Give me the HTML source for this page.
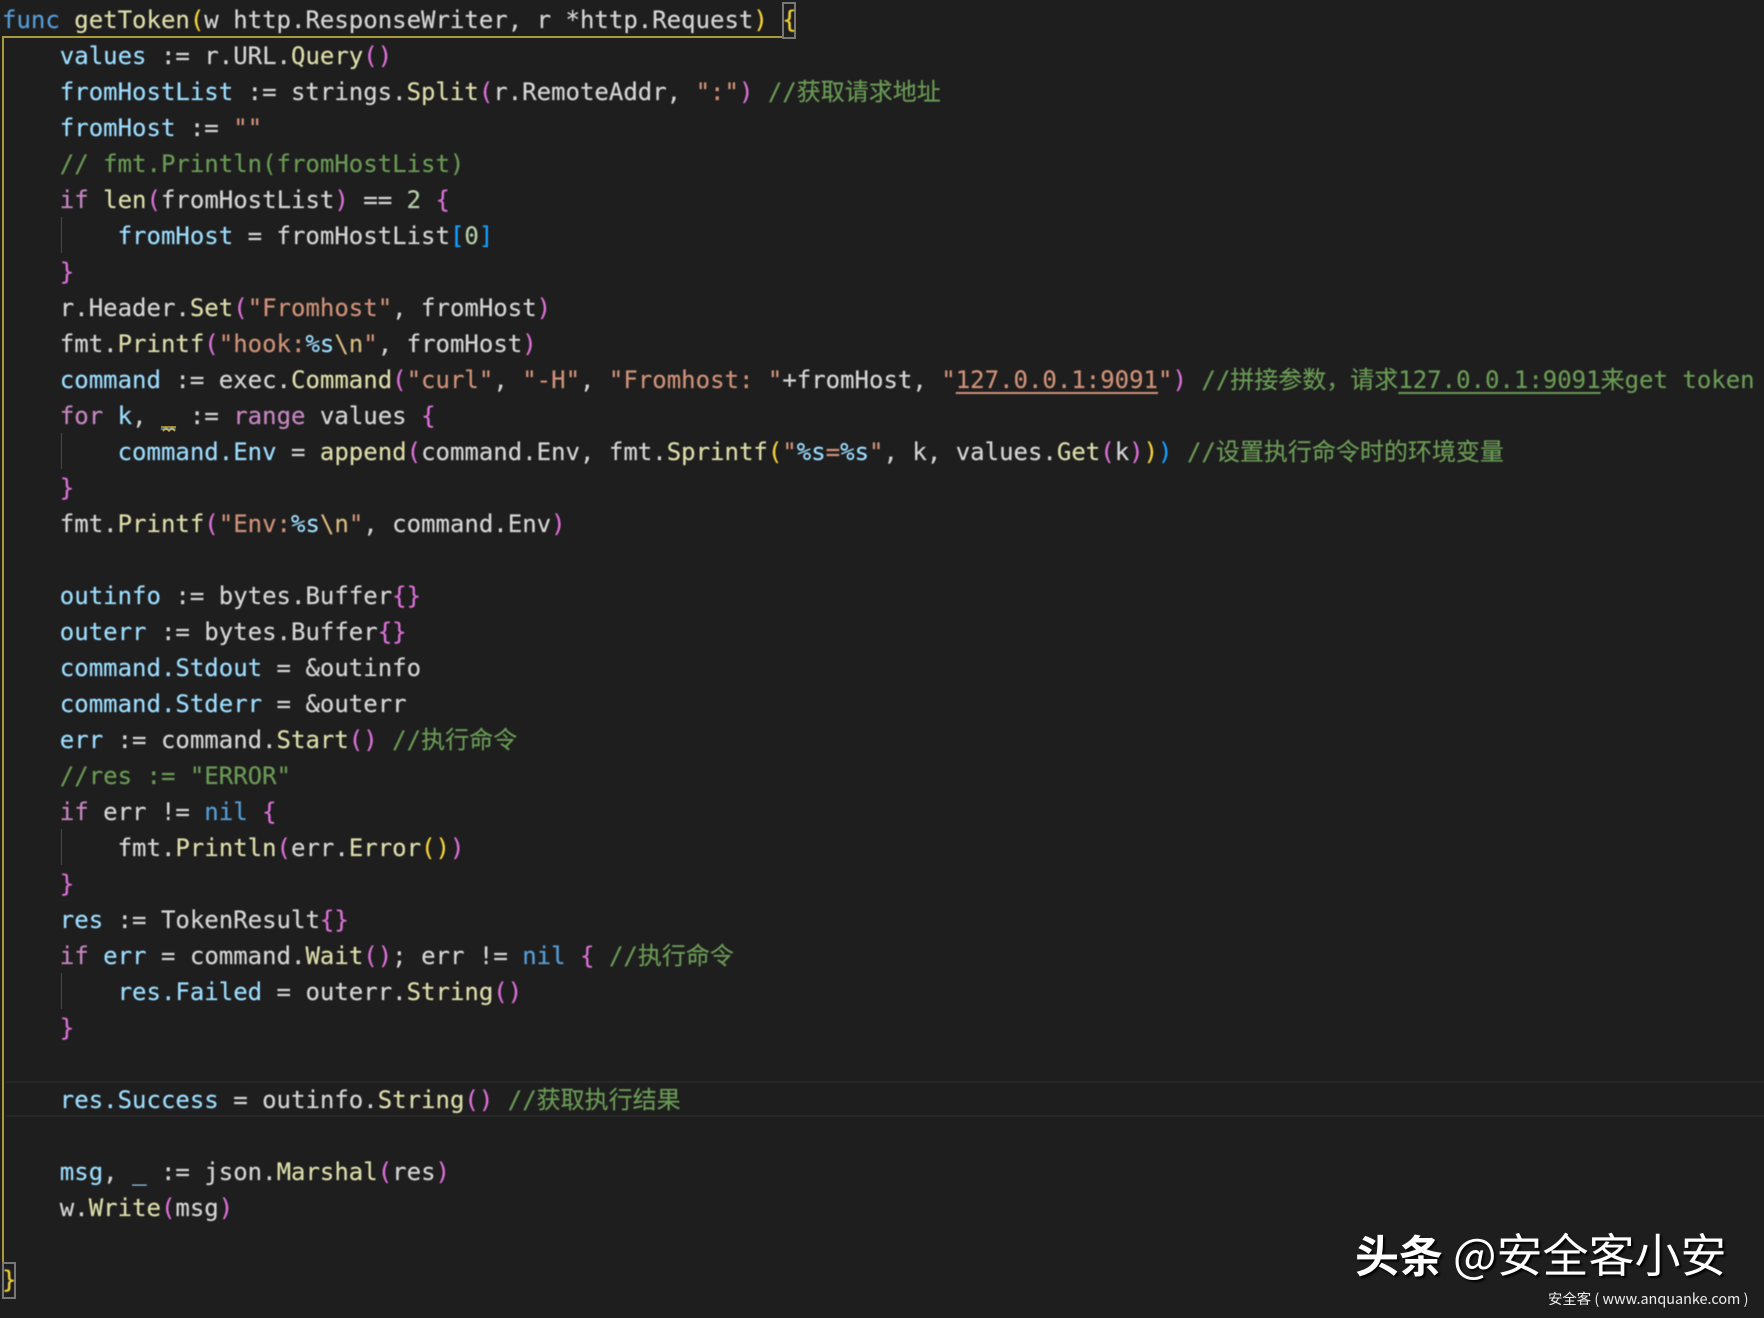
<!DOCTYPE html>
<html lang="zh"><head><meta charset="utf-8"><title>getToken</title>
<style>
html,body{margin:0;padding:0;background:#1e1e1e}
#p{position:relative;width:1764px;height:1318px;overflow:hidden;background:#1e1e1e}
.l{position:absolute;left:2px;margin-top:1px;height:36px;line-height:36px;white-space:pre;font-family:"DejaVu Sans Mono","Noto Sans CJK SC",monospace;font-size:24px;color:#d4d4d4;filter:blur(.4px);-webkit-text-stroke:.2px}
.a{position:absolute}
i{font-style:normal}
.v{color:#9cdcfe}.f{color:#dcdcaa}.k{color:#c586c0}.b{color:#569cd6}.s{color:#ce9178}.c{color:#6a9955}.n{color:#b5cea8}.e{color:#d7ba7d}
.g{color:#f2d33a}.m{color:#da70d6}.h{color:#179fff}
.u{text-decoration:underline;text-underline-offset:4px;text-decoration-thickness:2px}
.z{display:inline-block;width:24px;text-align:center;font-family:"Noto Sans CJK SC",sans-serif;font-size:24px;line-height:0}
</style></head><body><div id="p">
<div class="a" style="left:7px;top:1081px;width:1757px;height:32px;border-top:2px solid #282828;border-bottom:2px solid #282828"></div>
<div class="a" style="left:2px;top:36px;width:2px;height:1226px;background:#a89a3a"></div>
<div class="a" style="left:2px;top:36px;width:781px;height:2px;background:#a89a3a"></div>
<div class="a" style="left:782px;top:2px;width:10px;height:33px;border:2px solid #777"></div>
<div class="a" style="left:2px;top:1262px;width:10px;height:33px;border:2px solid #777"></div>
<div class="a" style="left:61px;top:217px;width:1px;height:36px;background:#484848"></div>
<div class="a" style="left:61px;top:433px;width:1px;height:36px;background:#484848"></div>
<div class="a" style="left:61px;top:829px;width:1px;height:36px;background:#484848"></div>
<div class="a" style="left:61px;top:973px;width:1px;height:36px;background:#484848"></div>
<svg class="a" style="left:160px;top:425px" width="18" height="10"><path d="M1 2h15M3 6l3-3 3 3 3-3 3 3" fill="none" stroke="#c9a52e" stroke-width="1.6"/></svg>

<div class="l" style="top:1px"><i class="b">func</i> <i class="f">getToken</i><i class="g">(</i>w http.ResponseWriter, r *http.Request<i class="g">)</i> <i class="g">{</i></div>
<div class="l" style="top:37px">    <i class="v">values</i> := r.URL.<i class="f">Query</i><i class="m">()</i></div>
<div class="l" style="top:73px">    <i class="v">fromHostList</i> := strings.<i class="f">Split</i><i class="m">(</i>r.RemoteAddr, <i class="s">":"</i><i class="m">)</i> <i class="c">//<i class="z">获</i><i class="z">取</i><i class="z">请</i><i class="z">求</i><i class="z">地</i><i class="z">址</i></i></div>
<div class="l" style="top:109px">    <i class="v">fromHost</i> := <i class="s">""</i></div>
<div class="l" style="top:145px">    <i class="c">// fmt.Println(fromHostList)</i></div>
<div class="l" style="top:181px">    <i class="k">if</i> <i class="f">len</i><i class="m">(</i>fromHostList<i class="m">)</i> == <i class="n">2</i> <i class="m">{</i></div>
<div class="l" style="top:217px">        <i class="v">fromHost</i> = fromHostList<i class="h">[</i><i class="n">0</i><i class="h">]</i></div>
<div class="l" style="top:253px">    <i class="m">}</i></div>
<div class="l" style="top:289px">    r.Header.<i class="f">Set</i><i class="m">(</i><i class="s">"Fromhost"</i>, fromHost<i class="m">)</i></div>
<div class="l" style="top:325px">    fmt.<i class="f">Printf</i><i class="m">(</i><i class="s">"hook:</i><i class="v">%s</i><i class="e">\n</i><i class="s">"</i>, fromHost<i class="m">)</i></div>
<div class="l" style="top:361px">    <i class="v">command</i> := exec.<i class="f">Command</i><i class="m">(</i><i class="s">"curl"</i>, <i class="s">"-H"</i>, <i class="s">"Fromhost: "</i>+fromHost, <i class="s">"</i><i class="s u">127.0.0.1:9091</i><i class="s">"</i><i class="m">)</i> <i class="c">//<i class="z">拼</i><i class="z">接</i><i class="z">参</i><i class="z">数</i><i class="z">，</i><i class="z">请</i><i class="z">求</i><i class="u">127.0.0.1:9091</i><i class="z">来</i>get token</i></div>
<div class="l" style="top:397px">    <i class="k">for</i> <i class="v">k</i>, <i class="v">_</i> := <i class="k">range</i> values <i class="m">{</i></div>
<div class="l" style="top:433px">        <i class="v">command.Env</i> = <i class="f">append</i><i class="m">(</i>command.Env, fmt.<i class="f">Sprintf</i><i class="g">(</i><i class="s">"</i><i class="v">%s</i><i class="s">=</i><i class="v">%s</i><i class="s">"</i>, k, values.<i class="f">Get</i><i class="m">(</i>k<i class="m">)</i><i class="g">)</i><i class="h">)</i> <i class="c">//<i class="z">设</i><i class="z">置</i><i class="z">执</i><i class="z">行</i><i class="z">命</i><i class="z">令</i><i class="z">时</i><i class="z">的</i><i class="z">环</i><i class="z">境</i><i class="z">变</i><i class="z">量</i></i></div>
<div class="l" style="top:469px">    <i class="m">}</i></div>
<div class="l" style="top:505px">    fmt.<i class="f">Printf</i><i class="m">(</i><i class="s">"Env:</i><i class="v">%s</i><i class="e">\n</i><i class="s">"</i>, command.Env<i class="m">)</i></div>
<div class="l" style="top:577px">    <i class="v">outinfo</i> := bytes.Buffer<i class="m">{}</i></div>
<div class="l" style="top:613px">    <i class="v">outerr</i> := bytes.Buffer<i class="m">{}</i></div>
<div class="l" style="top:649px">    <i class="v">command.Stdout</i> = &amp;outinfo</div>
<div class="l" style="top:685px">    <i class="v">command.Stderr</i> = &amp;outerr</div>
<div class="l" style="top:721px">    <i class="v">err</i> := command.<i class="f">Start</i><i class="m">()</i> <i class="c">//<i class="z">执</i><i class="z">行</i><i class="z">命</i><i class="z">令</i></i></div>
<div class="l" style="top:757px">    <i class="c">//res := "ERROR"</i></div>
<div class="l" style="top:793px">    <i class="k">if</i> err != <i class="b">nil</i> <i class="m">{</i></div>
<div class="l" style="top:829px">        fmt.<i class="f">Println</i><i class="m">(</i>err.<i class="f">Error</i><i class="g">()</i><i class="m">)</i></div>
<div class="l" style="top:865px">    <i class="m">}</i></div>
<div class="l" style="top:901px">    <i class="v">res</i> := TokenResult<i class="m">{}</i></div>
<div class="l" style="top:937px">    <i class="k">if</i> <i class="v">err</i> = command.<i class="f">Wait</i><i class="m">()</i>; err != <i class="b">nil</i> <i class="m">{</i> <i class="c">//<i class="z">执</i><i class="z">行</i><i class="z">命</i><i class="z">令</i></i></div>
<div class="l" style="top:973px">        <i class="v">res.Failed</i> = outerr.<i class="f">String</i><i class="m">()</i></div>
<div class="l" style="top:1009px">    <i class="m">}</i></div>
<div class="l" style="top:1081px">    <i class="v">res.Success</i> = outinfo.<i class="f">String</i><i class="m">()</i> <i class="c">//<i class="z">获</i><i class="z">取</i><i class="z">执</i><i class="z">行</i><i class="z">结</i><i class="z">果</i></i></div>
<div class="l" style="top:1153px">    <i class="v">msg</i>, <i class="v">_</i> := json.<i class="f">Marshal</i><i class="m">(</i>res<i class="m">)</i></div>
<div class="l" style="top:1189px">    w.<i class="f">Write</i><i class="m">(</i>msg<i class="m">)</i></div>
<div class="l" style="top:1261px"><i class="g">}</i></div>

<div class="a" style="left:1355px;top:1225px;font:700 44px/56px 'Noto Sans CJK SC',sans-serif;color:#fff;text-shadow:2px 2px 2px #000;white-space:nowrap">头条</div>
<div class="a" style="left:1453px;top:1223px;font:400 46px/60px 'Noto Sans CJK SC',sans-serif;color:#fff;text-shadow:2px 2px 2px #000;white-space:nowrap">@安全客小安</div>
<div class="a" style="left:1548px;top:1289px;font:400 14.4px/20px 'Noto Sans CJK SC',sans-serif;color:#eee;white-space:nowrap">安全客 ( www.anquanke.com )</div>
</div></body></html>
